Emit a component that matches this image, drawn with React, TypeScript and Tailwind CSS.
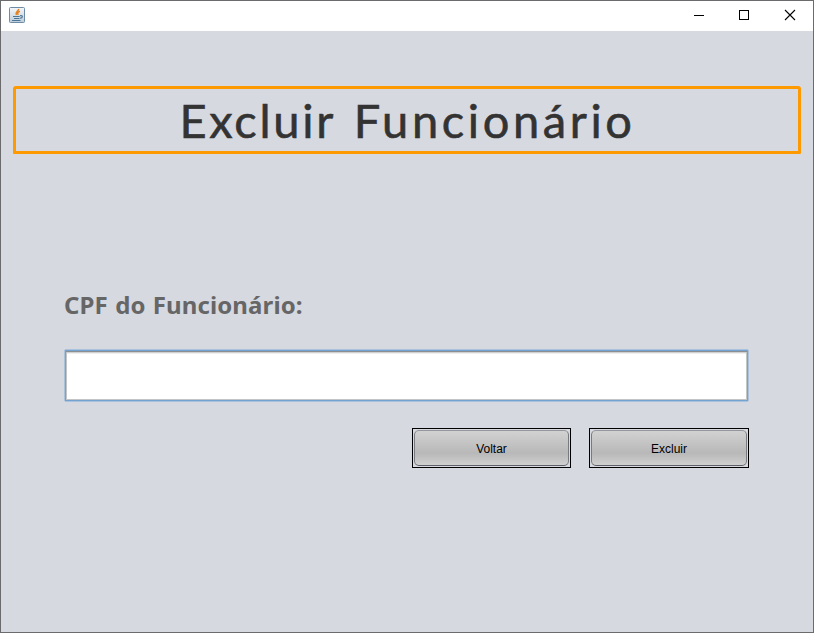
import type { ReactNode } from "react";

function JavaIcon() {
  return (
    <svg width="16" height="16" viewBox="0 0 16 16" fill="none">
      <defs>
        <linearGradient id="tile" x1="0" y1="0" x2="0" y2="1">
          <stop offset="0" stopColor="#f4f7f9" />
          <stop offset="1" stopColor="#bccddb" />
        </linearGradient>
      </defs>
      <rect x="0.5" y="0.5" width="15" height="15" rx="1" fill="url(#tile)" stroke="#6d8ba5" />
      <path d="M9.6 1.8C10 4 5.8 4.7 7.4 8M10.9 4.2C8.6 5.2 8.2 6 9.2 7.8" stroke="#e8801e" strokeWidth="1.5" />
      <path d="M4 9.5H10.7M5 11.5H10.5M3 13.5H11.5M11 8.7C14.3 8 14 11 11 11.2" stroke="#4c7595" strokeWidth="1.1" />
    </svg>
  );
}

function TitleBar() {
  return (
    <header className="flex h-[30px] items-start justify-between bg-white pl-2">
      <div className="pt-[6px]">
        <JavaIcon />
      </div>
      <svg width="137" height="30" viewBox="676 1 137 30" fill="none" stroke="#000" shapeRendering="crispEdges">
        <path d="M694 15.5H704" />
        <rect x="739.5" y="10.5" width="9" height="9" />
        <path d="M785 10L795 20M795 10L785 20" shapeRendering="auto" strokeWidth="1.1" />
      </svg>
    </header>
  );
}

function SwingButton({ children, className }: { children: ReactNode; className: string }) {
  return (
    <button
      className={`h-10 border border-black bg-[#d6d9e0] p-px font-['Liberation_Sans',Arial,sans-serif] text-[12px] text-black ${className}`}
    >
      <span className="flex h-full items-center justify-center rounded-[5px] border border-t-[#94969c] border-r-[#777a81] border-b-[#5b5e65] border-l-[#777a81] bg-linear-to-b from-[#d2d2d2] via-[#b8b8b8] via-65% to-[#d0d0d0] pt-px">
        {children}
      </span>
    </button>
  );
}

export default function App() {
  return (
    <div className="flex h-[633px] w-[814px] flex-col border border-[#6b6b6d] bg-[#d6d9e0]">
      <TitleBar />
      <main className="flex flex-col pt-[55px]">
        <h1 className="mr-3 ml-3 flex h-[68px] items-center justify-center rounded-t-[3px] rounded-b-[1px] border-3 border-[#ff9900] pl-px font-['Lato',sans-serif] text-[47px] leading-none whitespace-nowrap text-[#333] [-webkit-text-stroke:0.6px_#333]">
          <span className="whitespace-pre">
            <span className="tracking-[2.7px] [word-spacing:4px]">Excluir </span>
            <span className="tracking-[3.6px]">Funcionário</span>
          </span>
        </h1>
        <form className="mt-[136px] flex flex-col pr-16 pl-[63px]" onSubmit={(e) => e.preventDefault()}>
          <label
            htmlFor="cpf"
            className="h-[59px] font-['Noto_Sans','DejaVu_Sans',sans-serif] text-[24px] leading-[30px] font-bold tracking-[0.1px] whitespace-nowrap text-[#666] [word-spacing:1px]"
          >
            CPF do Funcionário:
          </label>
          <div className="h-[53px] rounded-[2px] border border-[#aac1dc] bg-white">
            <input
              id="cpf"
              className="block h-full w-full border border-[#73a4d1] bg-white px-2 text-lg shadow-[inset_0_1px_0_#8d8e91,inset_1px_0_0_#c3c4c6,inset_-1px_0_0_#c3c4c6,inset_0_-1px_0_#c3c4c6,inset_0_2px_0_#d1d1d2,inset_0_3px_0_#f0f0f0] outline-none"
            />
          </div>
          <div className="mt-[26px] flex justify-end gap-[18px]">
            <SwingButton className="w-[159px]">Voltar</SwingButton>
            <SwingButton className="w-[160px]">Excluir</SwingButton>
          </div>
        </form>
      </main>
    </div>
  );
}
